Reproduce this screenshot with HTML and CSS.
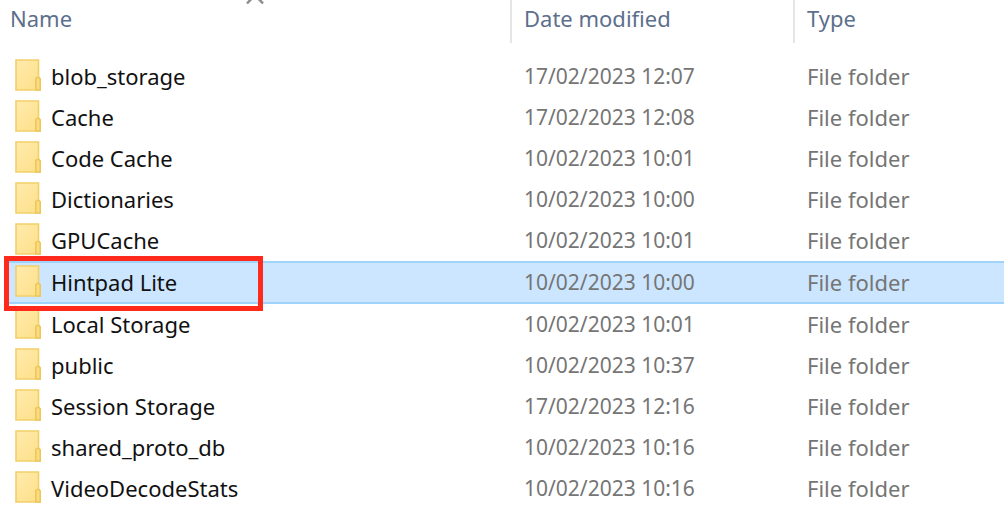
FILE: index.html
```
<!DOCTYPE html>
<html lang="en">
	<head>
		<meta charset="utf-8" />
		<title>File list</title>
		<link rel="stylesheet" href="styles.css">
	</head>

	<body>
		<!-- folder icon shared by every row -->
		<svg class="defs" width="0" height="0" aria-hidden="true">
			<defs>
				<linearGradient id="paper" x1="0" y1="0" x2="1" y2="1">
					<stop offset="0" stop-color="#ffebae" />
					<stop offset="1" stop-color="#fddf86" />
				</linearGradient>
				<symbol id="folder" viewBox="0 0 26 32">
					<path d="M1 1H23.5V18L25.2 20V31H1z" fill="url(#paper)" stroke="#f2cf69" stroke-width="1.6" />
					<path d="M20.8 31V19.5L22 18.5H24L25.2 20V31z" fill="#fbdc7f" stroke="#ecc75c" stroke-width="1.6" />
				</symbol>
			</defs>
		</svg>

		<table class="files">
			<colgroup>
				<col class="colName">
				<col class="colDate">
				<col>
			</colgroup>
			<thead>
				<tr>
					<th aria-sort="ascending">Name
						<svg class="sort" width="18" height="6" viewBox="0 0 18 6" aria-hidden="true">
							<path d="M1 3.5L9 -5L17 3.5" fill="none" stroke="#8c8c8c" stroke-width="2.5" />
						</svg>
					</th>
					<th>Date modified</th>
					<th>Type</th>
				</tr>
			</thead>
			<tbody>
				<tr>
					<td><span class="name"><svg class="icon"><use href="#folder" /></svg>blob_storage</span></td>
					<td class="date">17/02/2023 12:07</td>
					<td>File folder</td>
				</tr>
				<tr>
					<td><span class="name"><svg class="icon"><use href="#folder" /></svg>Cache</span></td>
					<td class="date">17/02/2023 12:08</td>
					<td>File folder</td>
				</tr>
				<tr>
					<td><span class="name"><svg class="icon"><use href="#folder" /></svg>Code Cache</span></td>
					<td class="date">10/02/2023 10:01</td>
					<td>File folder</td>
				</tr>
				<tr>
					<td><span class="name"><svg class="icon"><use href="#folder" /></svg>Dictionaries</span></td>
					<td class="date">10/02/2023 10:00</td>
					<td>File folder</td>
				</tr>
				<tr>
					<td><span class="name"><svg class="icon"><use href="#folder" /></svg>GPUCache</span></td>
					<td class="date">10/02/2023 10:01</td>
					<td>File folder</td>
				</tr>
				<tr class="selected">
					<td><span class="name"><svg class="icon"><use href="#folder" /></svg>Hintpad Lite</span><span class="marker"></span></td>
					<td class="date">10/02/2023 10:00</td>
					<td>File folder</td>
				</tr>
				<tr>
					<td><span class="name"><svg class="icon"><use href="#folder" /></svg>Local Storage</span></td>
					<td class="date">10/02/2023 10:01</td>
					<td>File folder</td>
				</tr>
				<tr>
					<td><span class="name"><svg class="icon"><use href="#folder" /></svg>public</span></td>
					<td class="date">10/02/2023 10:37</td>
					<td>File folder</td>
				</tr>
				<tr>
					<td><span class="name"><svg class="icon"><use href="#folder" /></svg>Session Storage</span></td>
					<td class="date">17/02/2023 12:16</td>
					<td>File folder</td>
				</tr>
				<tr>
					<td><span class="name"><svg class="icon"><use href="#folder" /></svg>shared_proto_db</span></td>
					<td class="date">10/02/2023 10:16</td>
					<td>File folder</td>
				</tr>
				<tr>
					<td><span class="name"><svg class="icon"><use href="#folder" /></svg>VideoDecodeStats</span></td>
					<td class="date">10/02/2023 10:16</td>
					<td>File folder</td>
				</tr>
			</tbody>
		</table>
	</body>
</html>
```
FILE: styles.css
```
* {
	padding: 0px;
	margin: 0px;
	box-sizing: border-box;
}
body {
	padding-left: 4px;
	background-color: white;
	font-family: "Segoe UI", "Noto Sans", "Open Sans", sans-serif;
	font-size: 22px;
	line-height: 41px;
}
.defs {
	position: absolute;
}
.files {
	width: 100%;
	table-layout: fixed;
	border-spacing: 0px;
}
.colName {
	width: 506px;
}
.colDate {
	width: 283px;
}

th {
	position: relative;
	height: 43px;
	padding-left: 12px;
	padding-bottom: 6px;
	line-height: 37px;
	text-align: left;
	font-weight: normal;
	color: #5d6f8c;
	border-left: 2px solid #e5e5e5;
}
th:first-child {
	padding-left: 6px;
	border-left: none;
}
.sort {
	position: absolute;
	top: 0px;
	left: 242px;
}

/* gap between the header and the first row */
tbody::before {
	content: "";
	display: block;
	height: 13px;
}
td {
	position: relative;
	height: 41px;
	padding-left: 14px;
	color: #757575;
	white-space: nowrap;
}
td:first-child {
	padding-left: 11px;
	color: #111;
}
.date {
	font-size: 21px;
}
.name {
	display: flex;
	align-items: center;
	gap: 10px;
}
.icon {
	width: 26px;
	height: 32px;
	margin-bottom: 3px;
}

.selected td {
	height: 43px;
	background-color: #cce6ff;
	border-top: 2px solid #9fd3fb;
	border-bottom: 2px solid #9fd3fb;
	line-height: 39px;
}
.marker {
	position: absolute;
	top: -7px;
	left: 0px;
	z-index: 1;
	width: 259px;
	height: 55px;
	border: 5px solid #ff2a1c;
}
```
